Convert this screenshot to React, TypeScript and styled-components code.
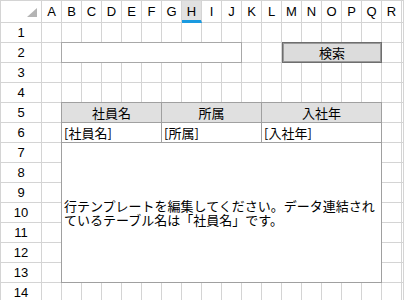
import React from 'react'
import styled, { createGlobalStyle } from 'styled-components'

const GlobalStyle = createGlobalStyle`
    html, body {
        margin: 0;
        padding: 0;
        background: #ffffff;
        overflow: hidden;
    }
    * {
        box-sizing: border-box;
    }
`

const COLUMNS = 'ABCDEFGHIJKLMNOPQR'.split('')
const ROWS = Array.from({ length: 14 }, (_, i) => i + 1)
const SELECTED_COL = 'H'

const Sheet = styled.div`
    display: grid;
    grid-template-columns: 42px repeat(18, 20px) 1fr;
    grid-template-rows: 23px repeat(14, 20px);
    width: 404px;
    height: 300px;
    overflow: hidden;
    font-family: "Liberation Sans", "Noto Sans CJK JP", sans-serif;
    color: #000000;
`

// every grid cell gets its own place so the overlays don't push them around
const Slot = styled.div<{ $row: number; $col: number }>`
    grid-row: ${({ $row }) => $row};
    grid-column: ${({ $col }) => $col};
`

const Corner = styled(Slot)`
    display: flex;
    align-items: flex-end;
    justify-content: flex-end;
    padding: 0 4px 5px 0;
    border: 1px solid #d4d4d4;
`

const ColHeader = styled(Slot)<{ $selected?: boolean }>`
    display: flex;
    align-items: center;
    justify-content: center;
    font-size: 13px;
    border-top: 1px solid #d4d4d4;
    border-right: 1px solid #d4d4d4;
    border-bottom: ${({ $selected }) => ($selected ? '3px solid #1a9ae0' : '1px solid #d4d4d4')};
    background: ${({ $selected }) => ($selected ? '#e1e1e1' : '#ffffff')};
    padding-top: ${({ $selected }) => ($selected ? '2px' : '0')};
`

const RowHeader = styled(Slot)`
    display: flex;
    align-items: center;
    justify-content: center;
    font-size: 13px;
    border-left: 1px solid #d4d4d4;
    border-right: 1px solid #d4d4d4;
    border-bottom: 1px solid #d4d4d4;
`

const Cell = styled(Slot)`
    border-right: 1px solid #d4d4d4;
    border-bottom: 1px solid #d4d4d4;
`

const TextBox = styled.input`
    grid-row: 3;
    grid-column: 3 / 12;
    margin: -1px 0 0 -1px;
    z-index: 1;
    border: 1px solid #a8a8a8;
    background: #ffffff;
    padding: 0 3px;
    outline: none;
    font-size: 13px;
`

const SearchButton = styled.button`
    grid-row: 3;
    grid-column: 14 / 19;
    margin: -1px 0 0 0;
    z-index: 1;
    border: 1px solid #6e6e6e;
    box-shadow: inset 0 0 0 1px #9a9a9a;
    background: #dcdcdc;
    padding: 0;
    font-family: "Noto Sans CJK JP", sans-serif;
    font-size: 13px;
    line-height: 18px;
    color: #000000;
`

const Template = styled.div`
    grid-row: 6 / 15;
    grid-column: 3 / 19;
    margin: -1px 0 0 -1px;
    z-index: 1;
    display: grid;
    grid-template-columns: 100px 100px 1fr;
    grid-template-rows: 20px 20px 1fr;
    border: 1px solid #a0a0a0;
    background: #ffffff;
    font-family: "Noto Sans CJK JP", sans-serif;
    font-size: 13px;
`

const HeadCell = styled.div<{ $last?: boolean }>`
    display: flex;
    align-items: center;
    justify-content: center;
    background: #e0e0e0;
    border-bottom: 1px solid #a0a0a0;
    border-right: ${({ $last }) => ($last ? 'none' : '1px solid #a0a0a0')};
    line-height: 19px;
`

const DataCell = styled.div<{ $last?: boolean }>`
    display: flex;
    align-items: center;
    padding-left: 2px;
    border-bottom: 1px solid #a0a0a0;
    border-right: ${({ $last }) => ($last ? 'none' : '1px solid #a0a0a0')};
    line-height: 19px;
`

const Body = styled.div`
    grid-column: 1 / 4;
    display: flex;
    align-items: center;
    padding: 0 2px;
    line-height: 14px;
    word-break: break-all;
`

const CornerMark = () => (
    <svg width="10" height="9" viewBox="0 0 10 9">
        <polygon points="10,0 10,9 0,9" fill="#b4b4b4" />
    </svg>
)

const fields = ['社員名', '所属', '入社年']

const App: React.FunctionComponent = () => {
    return (
        <>
            <GlobalStyle />
            <Sheet>
                <Corner $row={1} $col={1}>
                    <CornerMark />
                </Corner>
                {COLUMNS.map((c, ci) => (
                    <ColHeader key={c} $row={1} $col={ci + 2} $selected={c === SELECTED_COL}>{c}</ColHeader>
                ))}
                <ColHeader $row={1} $col={20} />

                {ROWS.map((r) => (
                    <React.Fragment key={r}>
                        <RowHeader $row={r + 1} $col={1}>{r}</RowHeader>
                        {COLUMNS.map((c, ci) => (
                            <Cell key={c} $row={r + 1} $col={ci + 2} />
                        ))}
                        <Cell $row={r + 1} $col={20} />
                    </React.Fragment>
                ))}

                <TextBox type="text" />
                <SearchButton>検索</SearchButton>

                <Template>
                    {fields.map((f, i) => (
                        <HeadCell key={f} $last={i === fields.length - 1}>{f}</HeadCell>
                    ))}
                    {fields.map((f, i) => (
                        <DataCell key={f} $last={i === fields.length - 1}>[{f}]</DataCell>
                    ))}
                    <Body>
                        行テンプレートを編集してください。データ連結されているテーブル名は「社員名」です。
                    </Body>
                </Template>
            </Sheet>
        </>
    )
}

export default App
